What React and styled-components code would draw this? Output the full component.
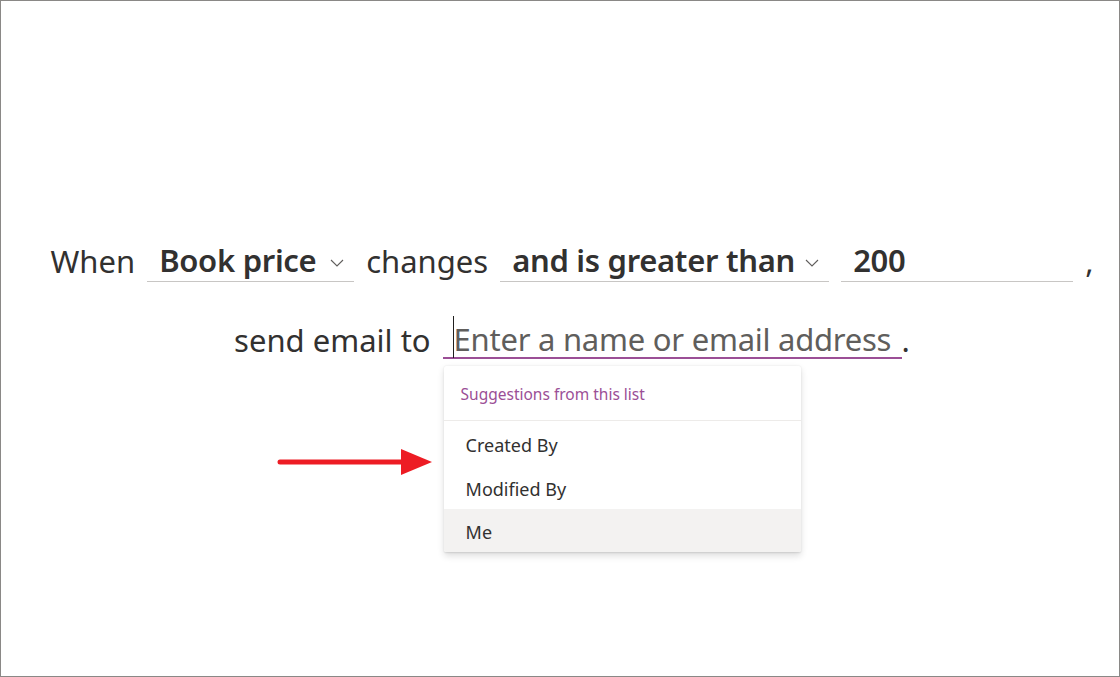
import React from "react";
import styled, { createGlobalStyle } from "styled-components";

const Global = createGlobalStyle`
  html, body { margin: 0; padding: 0; background: #fff; }
  body { font-family: "Noto Sans", "Open Sans", sans-serif; color: #323130; }
  * { box-sizing: border-box; }
`;

const Frame = styled.div`
  position: relative;
  width: 1120px;
  height: 677px;
  border: 1px solid #8a8886;
  background: #fff;
  display: flex;
  flex-direction: column;
  align-items: center;
  padding: 237px 0 0 24px;
`;

const Row = styled.div`
  display: flex;
  align-items: flex-end;
  justify-content: center;
  gap: 12px;
  height: ${(p) => p.$h}px;
  margin-bottom: ${(p) => p.$mb || 0}px;
  font-size: 31px;
  line-height: ${(p) => p.$lh || 42}px;
`;

const Word = styled.span`
  color: #323130;
  white-space: nowrap;
  margin-left: ${(p) => p.$ml || 0}px;
`;

const Field = styled.div`
  position: relative;
  display: flex;
  align-items: center;
  width: ${(p) => p.$w}px;
  height: 44px;
  padding: 0 10px 0 12px;
  border-bottom: 1px solid #c8c6c4;
  line-height: 42px;
`;

const FieldText = styled.span`
  font-weight: 600;
  letter-spacing: -0.3px;
  color: #323130;
  white-space: nowrap;
  flex: 1;
`;

const Chevron = styled.svg`
  width: 14px;
  height: 8px;
  margin: 6px 0 0 8px;
  flex: none;
`;

const EmailField = styled.div`
  position: relative;
  display: flex;
  align-items: center;
  width: 459px;
  height: 44px;
  padding-left: 10px;
  border-bottom: 2px solid #9b4f96;
  line-height: 42px;
`;

const Caret = styled.span`
  width: 1px;
  height: 42px;
  background: #201f1e;
  margin-top: 1px;
  align-self: flex-start;
  flex: none;
`;

const Placeholder = styled.span`
  color: #605e5c;
  white-space: nowrap;
  letter-spacing: -0.25px;
  padding-top: 6px;
`;

const Popup = styled.div`
  position: absolute;
  left: 1px;
  top: 51px;
  width: 357px;
  background: #fff;
  border-radius: 2px;
  box-shadow: 0 3.2px 7.2px rgba(0,0,0,0.13), 0 0.6px 1.8px rgba(0,0,0,0.11);
  overflow: hidden;
  z-index: 2;
`;

const PopupHeader = styled.div`
  height: 55px;
  display: flex;
  align-items: center;
  padding: 2px 0 0 17px;
  font-size: 15.5px;
  line-height: 20px;
  color: #9b4f96;
  border-bottom: 1px solid #edebe9;
`;

const Item = styled.div`
  height: ${(p) => p.$h || 44}px;
  display: flex;
  align-items: center;
  padding: 3px 0 0 22px;
  font-size: 18px;
  line-height: 24px;
  color: #323130;
  background: ${(p) => (p.$active ? "#f3f2f1" : "#fff")};
`;

const Arrow = styled.svg`
  position: absolute;
  left: 276px;
  top: 446px;
  width: 157px;
  height: 30px;
`;

const ChevronIcon = () => (
  <Chevron viewBox="0 0 14 8">
    <polyline points="1,1 7,7 13,1" fill="none" stroke="#605e5c" strokeWidth="1.1" />
  </Chevron>
);

export default function App() {
  return (
    <>
      <Global />
      <Frame>
        <Row $h={44} $mb={31}>
          <Word>When</Word>
          <Field $w={207}>
            <FieldText>Book price</FieldText>
            <ChevronIcon />
          </Field>
          <Word>changes</Word>
          <Field $w={329}>
            <FieldText>and is greater than</FieldText>
            <ChevronIcon />
          </Field>
          <Field $w={232}>
            <FieldText>200</FieldText>
          </Field>
          <Word>,</Word>
        </Row>
        <Row $h={46} $lh={38}>
          <Word>send email to</Word>
          <EmailField>
            <Caret />
            <Placeholder>Enter a name or email address</Placeholder>
            <Popup>
              <PopupHeader>Suggestions from this list</PopupHeader>
              <Item>Created By</Item>
              <Item>Modified By</Item>
              <Item $active $h={43}>Me</Item>
            </Popup>
          </EmailField>
          <Word $ml={-12}>.</Word>
        </Row>
        <Arrow viewBox="0 0 157 30">
          <line x1="3" y1="15" x2="126" y2="15" stroke="#ed1c24" strokeWidth="5" strokeLinecap="round" />
          <polygon points="124,2 155,15 124,28" fill="#ed1c24" />
        </Arrow>
      </Frame>
    </>
  );
}
